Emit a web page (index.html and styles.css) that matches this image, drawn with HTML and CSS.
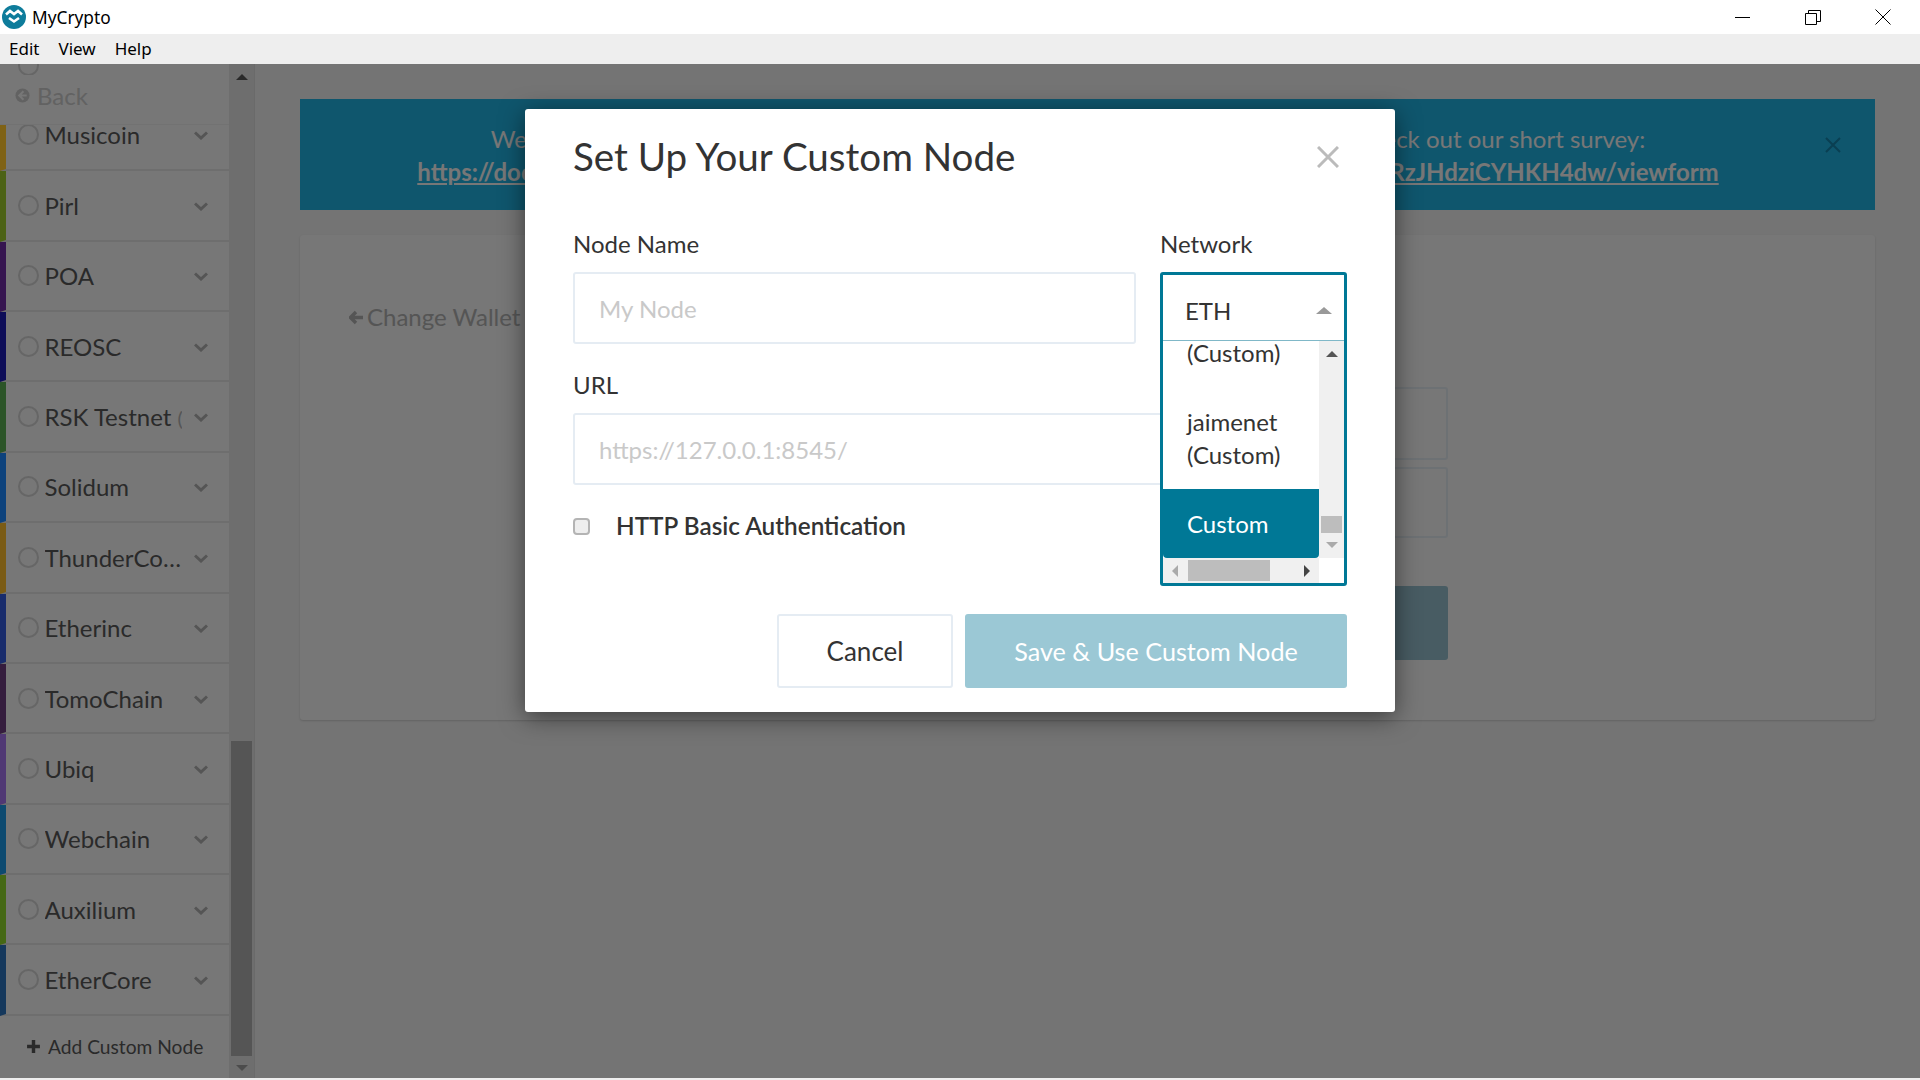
FILE: index.html
```html
<!DOCTYPE html>
<html lang="en">
<head>
    <meta charset="UTF-8">
    <title>MyCrypto</title>
    <link rel="stylesheet" href="styles.css">
</head>
<body>
    <div class="titlebar">
        <svg class="app-logo" viewBox="0 0 24 24">
            <circle cx="12" cy="12" r="12" fill="#0e7c9b"/>
            <path d="M4 9.5 L8 6 L12 9 L16 6 L20 9.5" fill="none" stroke="#fff" stroke-width="2.6"/>
            <path d="M7 13 L12 16.5 L17 13" fill="none" stroke="#fff" stroke-width="2.6"/>
        </svg>
        <span class="app-title">MyCrypto</span>
        <div class="window-buttons">
            <svg viewBox="0 0 16 16"><path d="M0 8.5 H15" stroke="#000" fill="none"/></svg>
            <svg viewBox="0 0 16 16"><path d="M0.5 4.5 H11.5 V15.5 H0.5 Z M3.5 4.5 V1.5 H15.5 V12.5 H11.5" stroke="#000" fill="none"/></svg>
            <svg viewBox="0 0 16 16"><path d="M0.5 0.5 L15.5 15.5 M15.5 0.5 L0.5 15.5" stroke="#000" fill="none"/></svg>
        </div>
    </div>
    <div class="menubar">
        <span>Edit</span>
        <span>View</span>
        <span>Help</span>
    </div>

    <div class="app">
        <aside class="sidebar">
            <div class="node-list">
                <div class="node-row node-row-empty"><span class="radio"></span></div>
                <div class="node-row c-musicoin"><span class="radio"></span><span class="node-name">Musicoin</span><svg class="chevron" viewBox="0 0 14 9"><path d="M1 1.5 L7 7 L13 1.5"/></svg></div>
                <div class="node-row c-pirl"><span class="radio"></span><span class="node-name">Pirl</span><svg class="chevron" viewBox="0 0 14 9"><path d="M1 1.5 L7 7 L13 1.5"/></svg></div>
                <div class="node-row c-poa"><span class="radio"></span><span class="node-name">POA</span><svg class="chevron" viewBox="0 0 14 9"><path d="M1 1.5 L7 7 L13 1.5"/></svg></div>
                <div class="node-row c-reosc"><span class="radio"></span><span class="node-name">REOSC</span><svg class="chevron" viewBox="0 0 14 9"><path d="M1 1.5 L7 7 L13 1.5"/></svg></div>
                <div class="node-row c-rsk"><span class="radio"></span><span class="node-name node-name-clip">RSK Testnet <small>(Testnet)</small></span><svg class="chevron" viewBox="0 0 14 9"><path d="M1 1.5 L7 7 L13 1.5"/></svg></div>
                <div class="node-row c-solidum"><span class="radio"></span><span class="node-name">Solidum</span><svg class="chevron" viewBox="0 0 14 9"><path d="M1 1.5 L7 7 L13 1.5"/></svg></div>
                <div class="node-row c-thunder"><span class="radio"></span><span class="node-name">ThunderCore</span><svg class="chevron" viewBox="0 0 14 9"><path d="M1 1.5 L7 7 L13 1.5"/></svg></div>
                <div class="node-row c-etherinc"><span class="radio"></span><span class="node-name">Etherinc</span><svg class="chevron" viewBox="0 0 14 9"><path d="M1 1.5 L7 7 L13 1.5"/></svg></div>
                <div class="node-row c-tomo"><span class="radio"></span><span class="node-name">TomoChain</span><svg class="chevron" viewBox="0 0 14 9"><path d="M1 1.5 L7 7 L13 1.5"/></svg></div>
                <div class="node-row c-ubiq"><span class="radio"></span><span class="node-name">Ubiq</span><svg class="chevron" viewBox="0 0 14 9"><path d="M1 1.5 L7 7 L13 1.5"/></svg></div>
                <div class="node-row c-webchain"><span class="radio"></span><span class="node-name">Webchain</span><svg class="chevron" viewBox="0 0 14 9"><path d="M1 1.5 L7 7 L13 1.5"/></svg></div>
                <div class="node-row c-auxilium"><span class="radio"></span><span class="node-name">Auxilium</span><svg class="chevron" viewBox="0 0 14 9"><path d="M1 1.5 L7 7 L13 1.5"/></svg></div>
                <div class="node-row c-ethercore"><span class="radio"></span><span class="node-name">EtherCore</span><svg class="chevron" viewBox="0 0 14 9"><path d="M1 1.5 L7 7 L13 1.5"/></svg></div>
            </div>
            <div class="add-node">
                <svg class="plus" viewBox="0 0 14 14"><path d="M7 1 V13 M1 7 H13"/></svg>
                <span>Add Custom Node</span>
            </div>
            <div class="back-bar">
                <svg class="back-icon" viewBox="0 0 16 16">
                    <circle cx="8" cy="8" r="7.5"/>
                    <path d="M9 3.5 L4.5 8 L9 12.5 M5 8 H12.5"/>
                </svg>
                <span>Back</span>
            </div>
        </aside>
        <div class="side-scroll">
            <span class="tri tri-up"></span>
            <span class="side-thumb"></span>
            <span class="tri tri-down"></span>
        </div>

        <main class="content">
            <div class="banner">
                <div class="banner-text">
                    We're always working to make MyCrypto even better, and we love all feedback, so check out our short survey:<br>
                    <a href="#">https://docs.google.com/forms/d/e/1FAIpQLSeXn0TqWvB8mKpLd2aPfUyW3gNc7sQv5bERzJHdziCYHKH4dw/viewform</a>
                </div>
                <svg class="banner-close" viewBox="0 0 16 16"><path d="M1 1 L15 15 M15 1 L1 15"/></svg>
            </div>
            <div class="card">
                <div class="change-wallet">
                    <svg class="back-arrow" viewBox="0 0 14 14"><path d="M7 1.5 L1.5 7 L7 12.5 M2 7 H14"/></svg>
                    <span>Change Wallet</span>
                </div>
                <div class="unlock-form">
                    <div class="ghost-input"></div>
                    <div class="ghost-input ghost-input-second"></div>
                    <div class="ghost-button"></div>
                </div>
            </div>
        </main>

        <div class="overlay">
            <div class="modal">
                <div class="modal-head">
                    <h2>Set Up Your Custom Node</h2>
                    <svg class="modal-close" viewBox="0 0 22 22"><path d="M1 1 L21 21 M21 1 L1 21"/></svg>
                </div>

                <div class="form-grid">
                    <div class="field">
                        <label>Node Name</label>
                        <input type="text" placeholder="My Node">
                    </div>
                    <div class="field">
                        <label>Network</label>
                        <div class="select-box">
                            <div class="select-menu">
                                <div class="select-value">
                                    <span>ETH</span>
                                    <span class="tri tri-select"></span>
                                </div>
                                <div class="select-body">
                                    <div class="options">
                                        <div class="option">devnet (Custom)</div>
                                        <div class="option">jaimenet (Custom)</div>
                                        <div class="option option-active">Custom</div>
                                    </div>
                                    <div class="scroll-v">
                                        <span class="tri tri-up"></span>
                                        <span class="scroll-v-thumb"></span>
                                        <span class="tri tri-down tri-light"></span>
                                    </div>
                                    <div class="scroll-h">
                                        <span class="tri tri-left"></span>
                                        <span class="scroll-h-thumb"></span>
                                        <span class="tri tri-right"></span>
                                    </div>
                                </div>
                            </div>
                        </div>
                    </div>
                    <div class="field field-wide">
                        <label>URL</label>
                        <input type="text" placeholder="https://127.0.0.1:8545/">
                    </div>
                </div>

                <label class="check-row">
                    <input type="checkbox">
                    <span>HTTP Basic Authentication</span>
                </label>

                <div class="modal-buttons">
                    <button class="btn-cancel">Cancel</button>
                    <button class="btn-save">Save &amp; Use Custom Node</button>
                </div>
            </div>
        </div>
    </div>
</body>
</html>
```

FILE: styles.css
```css
/* Window chrome */
body {
    margin: 0;
    height: 100vh;
    overflow: hidden;
    display: flex;
    flex-direction: column;
    background: #eeeeee;
    font-family: 'Lato', sans-serif;
    color: #333;
}

.titlebar {
    height: 34px;
    flex: none;
    display: flex;
    align-items: center;
    padding-left: 2px;
    background: #fff;
    font-family: 'Noto Sans', sans-serif;
    font-size: 17.3px;
    color: #000;
}

.app-logo {
    width: 24px;
    height: 24px;
    margin-right: 6px;
}

.window-buttons {
    margin-left: auto;
    display: flex;
    gap: 54px;
    margin-right: 29px;
}

    .window-buttons svg {
        width: 16px;
        height: 16px;
    }

.menubar {
    box-sizing: border-box;
    height: 30px;
    flex: none;
    display: flex;
    align-items: center;
    gap: 19px;
    padding: 0 0 2px 9px;
    background: #eeeeee;
    font-family: 'Noto Sans', sans-serif;
    font-size: 17px;
    color: #000;
}

.app {
    position: relative;
    height: 1014px;
    flex: none;
    display: flex;
    background: #e8e8e8;
    overflow: hidden;
}

/* Sidebar */
.sidebar {
    position: relative;
    width: 229px;
    flex: none;
    display: flex;
    flex-direction: column;
    background: #eeeeee;
    overflow: hidden;
}

.node-list {
    margin-top: -33.6px;
}

.node-row {
    box-sizing: border-box;
    height: 70.4px;
    display: flex;
    align-items: center;
    padding-left: 12px;
    border-left: 6px solid transparent;
    border-bottom: 2px solid #dcdcdc;
}

.node-row-empty {
    border-bottom: none;
}

.c-musicoin { border-left-color: #ffc42b; }
.c-pirl { border-left-color: #99c52a; }
.c-poa { border-left-color: #6c2aa0; }
.c-reosc { border-left-color: #1a1ab0; }
.c-rsk { border-left-color: #58a850; }
.c-solidum { border-left-color: #1a84f8; }
.c-thunder { border-left-color: #f4b72a; }
.c-etherinc { border-left-color: #3058d8; }
.c-tomo { border-left-color: #6a3a7c; }
.c-ubiq { border-left-color: #a070e8; }
.c-webchain { border-left-color: #1a94e0; }
.c-auxilium { border-left-color: #8ad02a; }
.c-ethercore { border-left-color: #2a70b8; }

.radio {
    box-sizing: border-box;
    width: 21px;
    height: 21px;
    flex: none;
    border: 2px solid #cccccc;
    border-radius: 50%;
}

.node-name {
    width: 137px;
    flex: none;
    margin-left: 5.5px;
    font-size: 24px;
    color: #555;
    white-space: nowrap;
    overflow: hidden;
    text-overflow: ellipsis;
}

.node-name-clip {
    text-overflow: clip;
}

    .node-name-clip small {
        font-size: 20px;
        color: #aaa;
    }

.chevron {
    width: 14px;
    height: 9px;
    margin-left: 12px;
    margin-top: 2px;
    fill: none;
    stroke: #aaaaaa;
    stroke-width: 3;
}

.back-bar {
    position: absolute;
    top: 11px;
    left: 0;
    right: 0;
    height: 50px;
    display: flex;
    align-items: center;
    gap: 7px;
    padding-left: 15px;
    padding-bottom: 9px;
    background: #eeeeee;
    font-size: 24px;
    color: #c4c4c4;
    border-bottom: 1px solid #e4e4e4;
    box-sizing: border-box;
}

.back-icon {
    width: 15px;
    height: 15px;
}

    .back-icon circle {
        fill: #c4c4c4;
    }

    .back-icon path {
        fill: none;
        stroke: #eeeeee;
        stroke-width: 2.2;
    }

.add-node {
    flex: 1;
    display: flex;
    align-items: center;
    gap: 7px;
    padding-left: 26px;
    font-size: 19.2px;
    color: #555;
}

.plus {
    width: 15px;
    height: 15px;
    fill: none;
    stroke: #555;
    stroke-width: 3.2;
}

.side-scroll {
    box-sizing: border-box;
    width: 26px;
    flex: none;
    display: flex;
    flex-direction: column;
    align-items: center;
    padding: 10px 0 7px;
    background: #dcdcdc;
    border-right: 1px solid #d4d4d4;
}

.side-thumb {
    width: 21px;
    height: 315px;
    margin-top: auto;
    margin-bottom: 9px;
    background: #aaaaaa;
}

/* Small scrollbar and select arrows */
.tri {
    width: 0;
    height: 0;
    flex: none;
    border-style: solid;
    border-color: transparent;
}

.tri-up {
    border-width: 0 6px 6px;
    border-bottom-color: #555;
}

.tri-down {
    border-width: 6px 6px 0;
    border-top-color: #999;
}

.tri-left {
    border-width: 6px 6px 6px 0;
    border-right-color: #aaa;
}

.tri-right {
    border-width: 6px 0 6px 6px;
    border-left-color: #444;
}

.tri-select {
    border-width: 0 8px 7px;
    border-bottom-color: #999;
}

.tri-light {
    border-top-color: #aaa;
}

/* Main content behind the modal */
.content {
    flex: 1;
    padding: 35px 45px 0 45px;
}

.banner {
    height: 111px;
    display: flex;
    align-items: center;
    background: #1eacda;
    color: #eeeeee;
}

.banner-text {
    flex: 1;
    min-width: 0;
    padding-left: 11px;
    text-align: center;
    font-size: 24px;
    line-height: 33px;
    white-space: nowrap;
}

    .banner-text a {
        color: #eeeeee;
        font-weight: bold;
    }

.banner-close {
    width: 16px;
    height: 16px;
    margin-right: 34px;
    margin-bottom: 19px;
    fill: none;
    stroke: #147ea4;
    stroke-width: 2;
}

.card {
    box-sizing: border-box;
    height: 485px;
    margin-top: 25px;
    padding: 67px 0 0 49px;
    background: #eeeeee;
    border-radius: 3px;
    box-shadow: 0 1px 2px rgba(0, 0, 0, 0.15);
}

.change-wallet {
    display: flex;
    align-items: center;
    gap: 4px;
    font-size: 24px;
    line-height: 30px;
    color: #aaaaaa;
}

.back-arrow {
    width: 14px;
    height: 15px;
    fill: none;
    stroke: #aaaaaa;
    stroke-width: 3.4;
}

.unlock-form {
    width: 700px;
    margin-left: 399px;
    margin-top: 55px;
}

.ghost-input {
    box-sizing: border-box;
    height: 73px;
    border: 2px solid #dbe2e9;
    border-radius: 3px;
}

.ghost-input-second {
    height: 71px;
    margin-top: 7px;
}

.ghost-button {
    height: 74px;
    margin-top: 48px;
    background: #90b8c6;
    border-radius: 3px;
}

/* Modal */
.overlay {
    position: absolute;
    top: 0;
    left: 0;
    right: 0;
    bottom: 0;
    display: flex;
    justify-content: center;
    align-items: flex-start;
    padding-top: 45px;
    background: rgba(0, 0, 0, 0.5);
}

.modal {
    box-sizing: border-box;
    width: 870px;
    padding: 25px 48px 24px;
    background: #fff;
    border-radius: 3px;
    box-shadow: 0 5px 25px rgba(0, 0, 0, 0.5);
}

.modal-head {
    display: flex;
    align-items: center;
    justify-content: space-between;
    padding-right: 8px;
}

    .modal-head h2 {
        margin: 0;
        font-size: 38.6px;
        line-height: 44px;
        font-weight: 400;
    }

.modal-close {
    width: 22px;
    height: 22px;
    margin-top: 1px;
    fill: none;
    stroke: #bbbbbb;
    stroke-width: 3;
}

.form-grid {
    display: grid;
    grid-template-columns: 563px 187px;
    column-gap: 24px;
    row-gap: 26px;
    margin-top: 51px;
}

.field-wide {
    grid-column: 1 / 3;
}

.field label {
    display: block;
    margin-bottom: 13px;
    font-size: 24px;
    line-height: 30px;
}

.field input {
    box-sizing: border-box;
    display: block;
    width: 100%;
    height: 72px;
    padding: 1px 24px 0;
    border: 2px solid #e5ecf3;
    border-radius: 3px;
    font-family: 'Lato', sans-serif;
    font-size: 24px;
    color: #333;
    outline: none;
}

    .field input::placeholder {
        color: #c9c9c9;
    }

.select-box {
    position: relative;
    height: 72px;
}

.select-menu {
    position: absolute;
    top: 0;
    left: 0;
    z-index: 2;
    box-sizing: border-box;
    width: 187px;
    height: 314px;
    background: #fff;
    border: 3px solid #007896;
    border-radius: 3px;
}

.select-value {
    box-sizing: border-box;
    height: 66px;
    display: flex;
    align-items: center;
    justify-content: space-between;
    padding: 6px 12px 0 22px;
    font-size: 24px;
    border-bottom: 1px solid #80b8c8;
}

.select-body {
    display: grid;
    grid-template-columns: 156px 25px;
    grid-template-rows: 217px 25px;
}

.options {
    display: flex;
    flex-direction: column;
    justify-content: flex-end;
    overflow: hidden;
}

.option {
    flex: none;
    padding: 18px 24px;
    font-size: 24px;
    line-height: 33px;
}

.option-active {
    background: #007896;
    color: #fff;
    border-radius: 0 0 4px 4px;
}

.scroll-v {
    display: flex;
    flex-direction: column;
    align-items: center;
    padding: 10px 0;
    background: #f0f0f0;
}

.scroll-v-thumb {
    width: 21px;
    height: 17px;
    margin-top: auto;
    margin-bottom: 9px;
    background: #bdbdbd;
}

.scroll-h {
    display: flex;
    align-items: center;
    padding: 0 9px;
    background: #f0f0f0;
}

.scroll-h-thumb {
    width: 82px;
    height: 21px;
    margin-left: 10px;
    margin-right: auto;
    background: #bdbdbd;
}

.check-row {
    display: flex;
    align-items: center;
    gap: 26px;
    margin-top: 26px;
    font-size: 24.3px;
    line-height: 30px;
    font-weight: 600;
}

    .check-row input {
        appearance: none;
        box-sizing: border-box;
        width: 17px;
        height: 17px;
        margin: 0;
        background: #eeeeee;
        border: 2px solid #b4b4b4;
        border-radius: 4px;
    }

.modal-buttons {
    display: flex;
    justify-content: flex-end;
    gap: 12px;
    margin-top: 73px;
}

    .modal-buttons button {
        box-sizing: border-box;
        height: 74px;
        border-radius: 3px;
        font-family: 'Lato', sans-serif;
        font-size: 26px;
    }

.btn-cancel {
    width: 176px;
    background: #fff;
    border: 2px solid #e5ecf3;
    color: #333;
}

.modal-buttons .btn-save {
    width: 382px;
    background: #9bc8d5;
    border: none;
    color: #fff;
    font-size: 25.2px;
}
```
